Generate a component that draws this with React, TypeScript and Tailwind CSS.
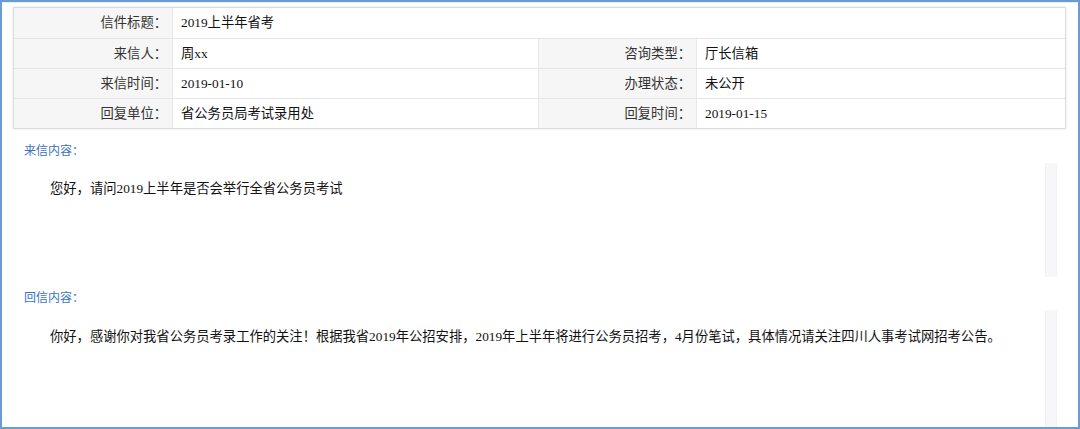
const FONT = { fontFamily: '"Liberation Serif", "Noto Sans CJK SC", serif' };

type Cell = { label: string; value: string };

const ROWS: Cell[][] = [
  [{ label: '来信人：', value: '周xx' }, { label: '咨询类型：', value: '厅长信箱' }],
  [{ label: '来信时间：', value: '2019-01-10' }, { label: '办理状态：', value: '未公开' }],
  [{ label: '回复单位：', value: '省公务员局考试录用处' }, { label: '回复时间：', value: '2019-01-15' }],
];

function Label({ children }: { children: string }) {
  return (
    <div className="bg-[#f6f6f6] pr-[5px] flex items-center justify-end text-[#333] border-r border-[#e8e8e8]">
      {children}
    </div>
  );
}

function Section({ title, text, height, pt }: { title: string; text: string; height: number; pt: string }) {
  return (
    <div>
      <div className="pl-[22px] text-[12px] leading-[14px] text-[#3b73c0]">{title}</div>
      <div className="flex mt-[5px]" style={{ height }}>
        <div className={`flex-1 pl-[48px] ${pt} text-[13.3px] leading-[16px] text-[#111]`}>{text}</div>
        <div className="w-[12px] bg-[#f7f7f9] border-x border-[#f2f2f4] mr-[21px]" />
      </div>
    </div>
  );
}

export default function App() {
  return (
    <div className="w-[1080px] h-[429px] bg-white border-2 border-[#6a9bd2] overflow-hidden" style={FONT}>
      <div className="h-[1px] bg-[#e4eef8]" />
      <div className="ml-[11px] mt-[4px] w-[1053px] border border-[#dcdcdc] shadow-[0_0_2px_rgba(0,0,0,0.12)] text-[13.3px] text-[#111]">
        <div className="grid grid-cols-[159px_1fr] h-[30px]">
          <Label>信件标题：</Label>
          <div className="flex items-center pl-[8px]">2019上半年省考</div>
        </div>
        {ROWS.map((row, i) => (
          <div key={i} className="grid grid-cols-[159px_366px_158px_1fr] h-[30px] border-t border-[#e6e6e6]">
            <Label>{row[0].label}</Label>
            <div className="flex items-center pl-[8px] border-r border-[#e8e8e8]">{row[0].value}</div>
            <Label>{row[1].label}</Label>
            <div className="flex items-center pl-[8px]">{row[1].value}</div>
          </div>
        ))}
      </div>

      <div className="mt-[15px]">
        <Section title="来信内容：" text="您好，请问2019上半年是否会举行全省公务员考试" height={114} pt="pt-[18px]" />
      </div>
      <div className="mt-[14px]">
        <Section
          title="回信内容："
          text="你好，感谢你对我省公务员考录工作的关注！根据我省2019年公招安排，2019年上半年将进行公务员招考，4月份笔试，具体情况请关注四川人事考试网招考公告。"
          height={130}
          pt="pt-[19px]"
        />
      </div>
    </div>
  );
}
